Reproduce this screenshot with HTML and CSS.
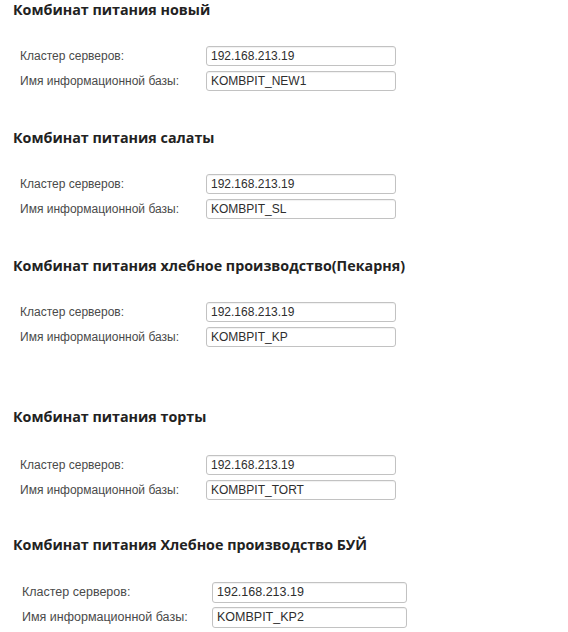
FILE: index.html
```html
<!DOCTYPE html>
<html lang="ru">
<head>
<meta charset="utf-8">
<title>Базы</title>
<link rel="stylesheet" href="styles.css">
</head>
<body>
<main class="page">
  <section class="site s1">
    <h2 class="site-title">Комбинат питания новый</h2>
    <div class="fields">
      <div class="label">Кластер серверов:</div><div class="input">192.168.213.19</div>
      <div class="label">Имя информационной базы:</div><div class="input">KOMBPIT_NEW1</div>
    </div>
  </section>
  <section class="site s2">
    <h2 class="site-title">Комбинат питания салаты</h2>
    <div class="fields">
      <div class="label">Кластер серверов:</div><div class="input">192.168.213.19</div>
      <div class="label">Имя информационной базы:</div><div class="input">KOMBPIT_SL</div>
    </div>
  </section>
  <section class="site s3">
    <h2 class="site-title">Комбинат питания хлебное производство(Пекарня)</h2>
    <div class="fields">
      <div class="label">Кластер серверов:</div><div class="input">192.168.213.19</div>
      <div class="label">Имя информационной базы:</div><div class="input">KOMBPIT_KP</div>
    </div>
  </section>
  <section class="site s4">
    <h2 class="site-title">Комбинат питания торты</h2>
    <div class="fields">
      <div class="label">Кластер серверов:</div><div class="input">192.168.213.19</div>
      <div class="label">Имя информационной базы:</div><div class="input">KOMBPIT_TORT</div>
    </div>
  </section>
  <section class="site s5">
    <h2 class="site-title">Комбинат питания Хлебное производство БУЙ</h2>
    <div class="fields big">
      <div class="label">Кластер серверов:</div><div class="input">192.168.213.19</div>
      <div class="label">Имя информационной базы:</div><div class="input">KOMBPIT_KP2</div>
    </div>
  </section>
</main>
</body>
</html>
```
FILE: styles.css
```css
html, body {
  margin: 0;
  padding: 0;
  background: #ffffff;
}
.page {
  padding-top: 1px;
  display: flex;
  flex-direction: column;
}
.site-title {
  margin: 0;
  padding-left: 13px;
  font-family: "Open Sans", "Noto Sans", sans-serif;
  font-weight: 700;
  font-size: 14.3px;
  line-height: 18px;
  color: #222222;
}
.fields {
  margin-top: 27px;
  padding-left: 20px;
  display: grid;
  grid-template-columns: 186px 190px;
  grid-auto-rows: 20px;
  row-gap: 5px;
  font-family: "Liberation Sans", Arial, sans-serif;
  font-size: 12px;
}
.label {
  line-height: 20px;
  color: #4a4a4a;
}
.input {
  box-sizing: border-box;
  border: 1px solid #c2c2c2;
  border-radius: 3px;
  box-shadow: inset 0 1px 1px rgba(0,0,0,0.06);
  padding-left: 4px;
  line-height: 18px;
  color: #2e2e2e;
}
.s2 { margin-top: 38px; }
.s3 { margin-top: 38px; }
.s4 { margin-top: 61px; }
.s4 .fields { margin-top: 29px; }
.s5 { margin-top: 36px; }
.fields.big {
  margin-top: 28px;
  padding-left: 22px;
  grid-template-columns: 190px 195px;
  grid-auto-rows: 21px;
  row-gap: 4px;
  font-size: 12.5px;
}
.fields.big .label { line-height: 21px; }
.fields.big .input { line-height: 19px; }
```
